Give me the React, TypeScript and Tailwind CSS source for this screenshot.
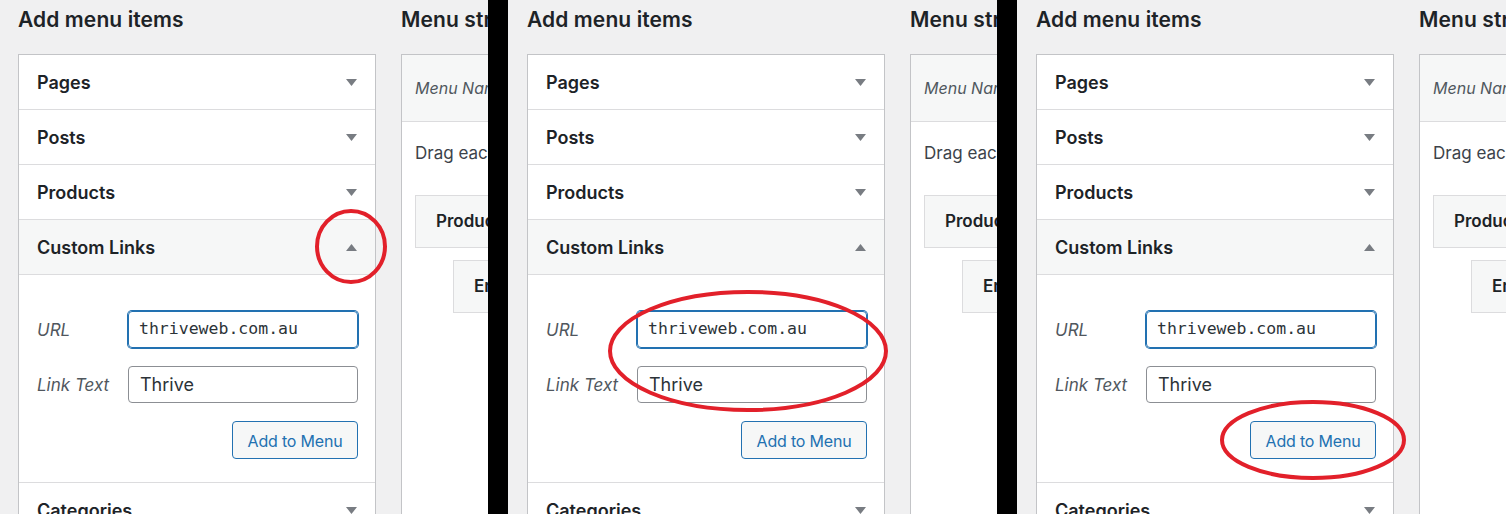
const sans = "font-['Inter','Liberation_Sans',sans-serif]"

const sections = ["Pages", "Posts", "Products"]

const Caret = ({ up = false }: { up?: boolean }) => (
  <svg className="h-[7px] w-[11px] text-[#787c82]" viewBox="0 0 11 7">
    {up ? (
      <path d="M5.5 0 L11 7 L0 7 Z" fill="currentColor" />
    ) : (
      <path d="M0 0 L11 0 L5.5 7 Z" fill="currentColor" />
    )}
  </svg>
)

const Row = ({ label, open = false }: { label: string; open?: boolean }) => (
  <div
    className={`flex h-[55px] items-center justify-between border-b border-[#dcdcde] pr-[18px] pl-[18px] ${
      open ? "bg-[#f6f7f7]" : "bg-white"
    }`}
  >
    <span className="font-semibold text-[18px] text-[#1d2327]">{label}</span>
    <Caret up={open} />
  </div>
)

type Ring = { cx: number; cy: number; rx: number; ry: number }

const Panel = ({ left, width, ring }: { left: number; width: number; ring: Ring }) => {
  return (
    <div
      className={`relative h-full shrink-0 overflow-hidden bg-[#f0f0f1] ${sans}`}
      style={{ width }}
    >
      <div className="flex pt-[6px]" style={{ paddingLeft: left }}>
        {/* add menu items */}
        <div className="w-[358px] shrink-0">
          <h2 className="mb-[20px] font-semibold text-[21px] text-[#1d2327] leading-[28px] tracking-[0.1px]">
            Add menu items
          </h2>
          <div className="border border-[#c3c4c7] bg-white">
            {sections.map((s) => (
              <Row key={s} label={s} />
            ))}
            <Row label="Custom Links" open />
            <div className="border-b border-[#dcdcde] pt-[36px] pr-[17px] pb-[23px] pl-[18px]">
              <div className="flex items-center">
                <span className="w-[91px] pt-[3px] text-[17px] text-[#50575e] italic">URL</span>
                <div className="flex h-[37px] w-[230px] items-center rounded-[4px] border border-[#2271b1] px-[10px] shadow-[0_0_0_1px_#2271b1]">
                  <span className="font-['DejaVu_Sans_Mono',monospace] text-[16.5px] text-[#2c3338]">
                    thriveweb.com.au
                  </span>
                </div>
              </div>
              <div className="mt-[18px] flex items-center">
                <span className="w-[91px] pt-[3px] text-[17px] text-[#50575e] italic">
                  Link Text
                </span>
                <div className="flex h-[37px] w-[230px] items-center rounded-[4px] border border-[#8c8f94] px-[11px]">
                  <span className="text-[18px] text-[#2c3338]">Thrive</span>
                </div>
              </div>
              <div className="mt-[18px] flex justify-end">
                <button className="h-[38px] w-[126px] rounded-[4px] border border-[#2271b1] bg-[#f6f7f7] pt-[2px] text-[16px] text-[#2271b1] tracking-[-0.2px]">
                  Add to Menu
                </button>
              </div>
            </div>
            <Row label="Categories" />
          </div>
        </div>

        {/* menu structure, cut off by the panel edge */}
        <div className="ml-[25px] w-[600px] shrink-0">
          <h2 className="mb-[20px] whitespace-nowrap font-semibold text-[21px] text-[#1d2327] leading-[28px] tracking-[0.1px]">
            Menu structure
          </h2>
          <div className="border border-[#c3c4c7] bg-white">
            <div className="flex h-[67px] items-center border-b border-[#dcdcde] bg-[#f6f7f7] pl-[13px]">
              <span className="text-[16px] text-[#50575e] italic">Menu Name</span>
            </div>
            <div className="pt-[19px] pl-[13px]">
              <p className="text-[17px] text-[#3c434a] leading-[24px]">
                Drag each item into the order you prefer.
              </p>
              <div className="mt-[30px] flex h-[53px] w-[380px] items-center border border-[#dcdcde] bg-[#f6f7f7] pl-[20px]">
                <span className="font-semibold text-[17px] text-[#1d2327]">Products</span>
              </div>
              <div className="mt-[12px] ml-[38px] flex h-[53px] w-[380px] items-center border border-[#dcdcde] bg-[#f6f7f7] pl-[20px]">
                <span className="font-semibold text-[17px] text-[#1d2327]">Enquiries</span>
              </div>
            </div>
            <div className="h-[300px]" />
          </div>
        </div>
      </div>

      <svg className="pointer-events-none absolute inset-0 h-full w-full">
        <ellipse
          cx={ring.cx}
          cy={ring.cy}
          fill="none"
          rx={ring.rx}
          ry={ring.ry}
          stroke="#e2202a"
          strokeWidth={4}
        />
      </svg>
    </div>
  )
}

export default function App() {
  return (
    <div className="flex h-[514px] w-[1506px] overflow-hidden bg-black">
      <Panel left={18} ring={{ cx: 351, cy: 246.5, rx: 34, ry: 35.5 }} width={488} />
      <div className="w-[20px] shrink-0 bg-black" />
      <Panel left={19} ring={{ cx: 240, cy: 351, rx: 138, ry: 59 }} width={489} />
      <div className="w-[20px] shrink-0 bg-black" />
      <Panel left={19} ring={{ cx: 296, cy: 440, rx: 91, ry: 38 }} width={489} />
    </div>
  )
}
